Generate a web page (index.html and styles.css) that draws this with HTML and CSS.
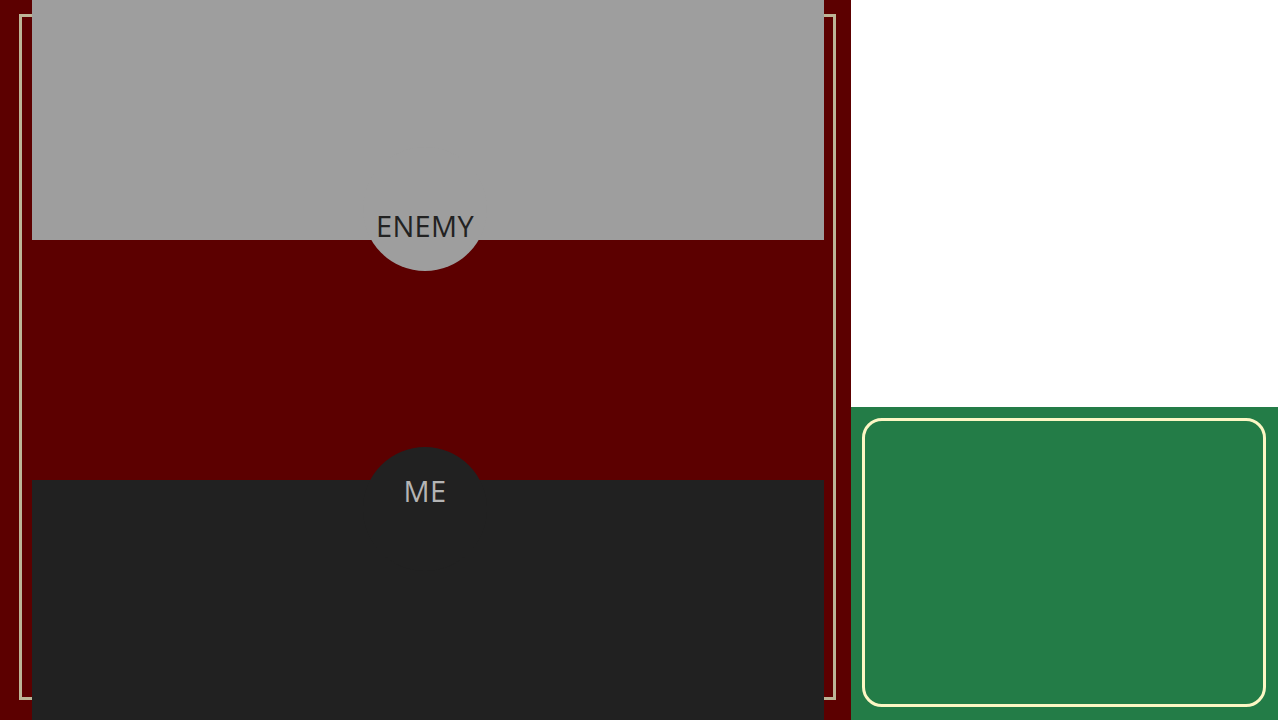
FILE: index.html
```html
<!DOCTYPE html>
<html lang="en">
<head>
    <meta charset="UTF-8">
    <meta name="viewport" content="width=device-width, initial-scale=1.0">
    <title>Battle</title>
    <link rel="stylesheet" href="styles.css">
</head>
<body>

<div class="board">
    <div class="board-frame"></div>

    <div class="side enemy-side">
        <div class="side-label">ENEMY</div>
    </div>

    <div class="field"></div>

    <div class="side me-side">
        <div class="side-label">ME</div>
    </div>
</div>

<div class="sidebar">
    <div class="sidebar-top"></div>
    <div class="sidebar-bottom">
        <div class="hand-card"></div>
    </div>
</div>

</body>
</html>
```

FILE: styles.css
```css
body {
    font-family: "Open Sans", Arial, sans-serif;
    margin: 0;
    width: 1278px;
    height: 720px;
    overflow: hidden;
    display: flex;
}

.board {
    position: relative;
    width: 851px;
    height: 720px;
    background-color: #5c0000;
    display: flex;
    flex-direction: column;
}

/* decorative frame that sits behind the two panels */
.board-frame {
    position: absolute;
    left: 19px;
    top: 14px;
    width: 811px;
    height: 680px;
    border: 3px solid #bdb597;
}

.side {
    position: relative;
    height: 240px;
    margin: 0 27px 0 32px;
}

.field {
    flex: 1;
}

.enemy-side {
    background-color: #9e9e9e;
}

.me-side {
    background-color: #212121;
}

.side-label {
    position: absolute;
    left: 50%;
    width: 124px;
    height: 124px;
    margin-left: -65px;
    border-radius: 50%;
    box-sizing: border-box;
    text-align: center;
    font-size: 29px;
    line-height: 30px;
    letter-spacing: 0.3px;
}

.enemy-side .side-label {
    bottom: -31px;
    background-color: #9e9e9e;
    color: #222222;
    padding-top: 64px;
}

.me-side .side-label {
    top: -33px;
    background-color: #212121;
    color: #b4b4b4;
    padding-top: 29px;
}

.sidebar {
    flex: 1;
    display: flex;
    flex-direction: column;
}

.sidebar-top {
    height: 407px;
    background-color: #ffffff;
}

.sidebar-bottom {
    flex: 1;
    background-color: #237c47;
    padding: 11px 12px 13px 11px;
    display: flex;
}

.hand-card {
    flex: 1;
    border: 3px solid #fcf7c5;
    border-radius: 20px;
}
```
